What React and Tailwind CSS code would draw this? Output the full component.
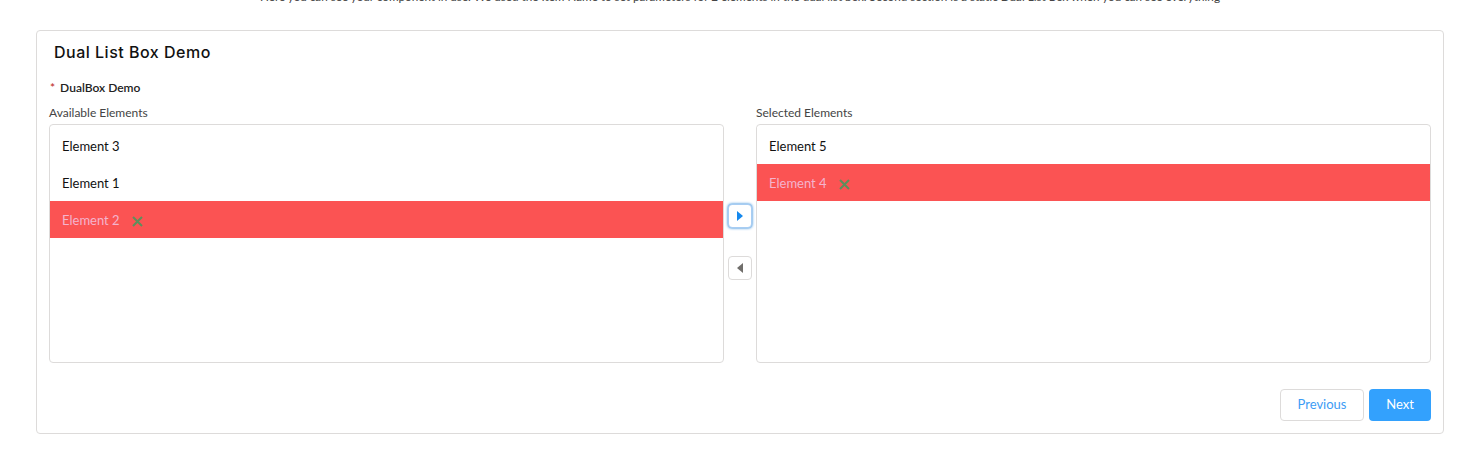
import React from "react";

const Cross = () => (
  <svg width="11" height="11" viewBox="0 0 11 11" className="ml-[12px] mt-[1px]">
    <path d="M1 1 L10 10 M10 1 L1 10" stroke="#5c8f5c" strokeWidth="2" strokeLinecap="butt" />
  </svg>
);

const Item = ({ label, selected }) => (
  <div
    className={
      "h-[37px] flex items-center pl-[12px] pt-[2px] text-[13px] " +
      (selected ? "bg-[#fb5353] text-[#f4b4cd]" : "text-[#111] bg-white")
    }
  >
    <span>{label}</span>
    {selected && <Cross />}
  </div>
);

const ListBox = ({ label, items }) => (
  <div className="flex flex-col w-[675px]">
    <div className="h-[16px] leading-[16px] text-[12px] text-[#444] mt-[9px]">{label}</div>
    <div className="mt-[3px] h-[239px] border border-[#dddbda] rounded-[4px] bg-white pt-[2px] overflow-hidden">
      {items.map((it) => (
        <Item key={it.label} {...it} />
      ))}
    </div>
  </div>
);

export default function App() {
  return (
    <div className="w-[1472px] h-[452px] bg-white overflow-hidden" style={{ fontFamily: "Lato, 'Liberation Sans', sans-serif" }}>
      <div className="h-[30px] overflow-hidden flex justify-center pl-[8px]">
        <div className="-mt-[12px] h-[16px] leading-[16px] text-[11.7px] text-[#444] whitespace-nowrap">
          Here you can see your component in use. We used the Item Name to set parameters for 2 elements in the dual list box. Second section is a static Dual List Box when you can see everything
        </div>
      </div>
      <div className="ml-[36px] w-[1408px] border border-[#dddbda] rounded-[4px] h-[404px] px-[12px]">
        <div className="mt-[9px] h-[24px] leading-[24px] pl-[5px] text-[16px] font-medium tracking-[0.5px] text-[#111]" style={{ fontFamily: "Inter, 'Open Sans', sans-serif" }}>
          Dual List Box Demo
        </div>
        <div className="mt-[16px] h-[16px] leading-[16px] text-[12px] text-[#222] font-semibold flex items-center">
          <span className="text-[#c23934] mr-[5px] ml-[1px]">*</span>
          <span>DualBox Demo</span>
        </div>
        <div className="flex">
          <ListBox
            label="Available Elements"
            items={[
              { label: "Element 3" },
              { label: "Element 1" },
              { label: "Element 2", selected: true },
            ]}
          />
          <div className="w-[32px] flex flex-col items-center justify-start gap-[28px] pt-[108px]">
            <button className="w-[24px] h-[24px] border border-[#a8cdf3] rounded-[4px] bg-white flex items-center justify-center shadow-[0_0_3px_#0070d2]">
              <svg width="8" height="10" viewBox="0 0 8 10">
                <path d="M1 0 L7 5 L1 10 Z" fill="#1589ee" />
              </svg>
            </button>
            <button className="w-[24px] h-[24px] border border-[#dddbda] rounded-[4px] bg-white flex items-center justify-center">
              <svg width="8" height="10" viewBox="0 0 8 10">
                <path d="M7 0 L1 5 L7 10 Z" fill="#706e6b" />
              </svg>
            </button>
          </div>
          <ListBox
            label="Selected Elements"
            items={[{ label: "Element 5" }, { label: "Element 4", selected: true }]}
          />
        </div>
        <div className="mt-[26px] flex justify-end gap-[5px]">
          <button className="h-[32px] w-[84px] border border-[#dddbda] rounded-[4px] bg-white text-[13px] text-[#3d9cf5]">
            Previous
          </button>
          <button className="h-[32px] w-[62px] rounded-[4px] bg-[#33a1fd] text-[13px] text-white">
            Next
          </button>
        </div>
      </div>
    </div>
  );
}
